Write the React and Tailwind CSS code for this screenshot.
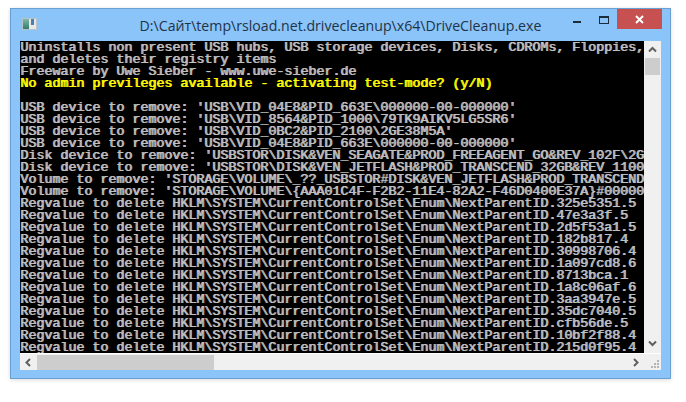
import React from 'react';

const regIds = [
  '325e5351.5', '47e3a3f.5', '2d5f53a1.5', '182b817.4', '30998706.4', '1a097cd8.6', '8713bca.1',
  '1a8c06af.6', '3aa3947e.5', '35dc7040.5', 'cfb56de.5', '10bf2f88.4', '215d0f95.4',
];

const lines = [
  'Uninstalls non present USB hubs, USB storage devices, Disks, CDROMs, Floppies,',
  'and deletes their registry items',
  'Freeware by Uwe Sieber - www.uwe-sieber.de',
  'No admin previleges available - activating test-mode? (y/N)',
  ' ',
  "USB device to remove: 'USB\\VID_04E8&PID_663E\\000000-00-000000'",
  "USB device to remove: 'USB\\VID_8564&PID_1000\\79TK9AIKV5LG5SR6'",
  "USB device to remove: 'USB\\VID_0BC2&PID_2100\\2GE38M5A'",
  "USB device to remove: 'USB\\VID_04E8&PID_663E\\000000-00-000000'",
  "Disk device to remove: 'USBSTOR\\DISK&VEN_SEAGATE&PROD_FREEAGENT_GO&REV_102F\\2G",
  "Disk device to remove: 'USBSTOR\\DISK&VEN_JETFLASH&PROD_TRANSCEND_32GB&REV_1100",
  "Volume to remove: 'STORAGE\\VOLUME\\_??_USBSTOR#DISK&VEN_JETFLASH&PROD_TRANSCEND",
  "Volume to remove: 'STORAGE\\VOLUME\\{AAA01C4F-F2B2-11E4-82A2-F46D0400E37A}#00000",
  ...regIds.map((id) => `Regvalue to delete HKLM\\SYSTEM\\CurrentControlSet\\Enum\\NextParentID.${id}`),
];

const Chevron = ({ d }) => (
  <svg width="9" height="9" viewBox="0 0 9 9" fill="none" stroke="#606060" strokeWidth="2">
    <path d={d} />
  </svg>
);

export default function App() {
  return (
    <div className="w-[686px] h-[402px] bg-white pt-2 pl-[10px] overflow-hidden">
      <div className="w-[661px] h-[371px] bg-[#8ac4f8] border border-[#6a9fd0] shadow-[0_1px_4px_rgba(0,0,0,0.15)] flex flex-col">
        {/* title bar */}
        <div className="h-[32px] grid grid-cols-[1fr_auto_1fr] items-start shrink-0">
          <div className="pl-[11px] pt-[9px]">
            <div className="w-[15px] h-[12px] bg-[#e8e8e8] border border-[#b8c4cc] flex">
              <div className="w-[6px] h-full bg-gradient-to-b from-[#7fb8a8] to-[#2f7d6a]" />
              <div className="w-[2px]" />
              <div className="w-[3px] h-[6px] bg-[#4a7fb0]" />
            </div>
          </div>
          <div className="pt-[7px] text-[14.15px] leading-[20px] text-[#1f3348] whitespace-nowrap font-['Open_Sans',sans-serif]">
            D:\Сайт\temp\rsload.net.drivecleanup\x64\DriveCleanup.exe
          </div>
          <div className="flex items-start justify-end pr-[8px]">
            <div className="w-[8px] h-[2px] bg-[#1c2c3a] mt-[12px] mr-[18px]" />
            <div className="w-[10px] h-[8px] border border-t-2 border-[#1c2c3a] mt-[7px] mr-[8px]" />
            <div className="w-[45px] h-[20px] bg-[#c75050] flex items-center justify-center">
              <svg width="9" height="9" viewBox="0 0 9 9" stroke="#fff" strokeWidth="2">
                <path d="M1 1l7 7M8 1l-7 7" />
              </svg>
            </div>
          </div>
        </div>

        {/* console + scrollbars */}
        <div className="mx-[9px] h-[329px] flex flex-col shrink-0 bg-[#f0f0f0]">
          <div className="flex h-[312px]">
            <div className="w-[624px] h-[312px] pt-[1px] bg-black overflow-hidden">
              {lines.map((line, i) => (
                <div
                  key={i}
                  className={`h-[12px] leading-[12px] text-[13.333px] [text-shadow:1px_0_0_currentColor] whitespace-pre font-['Liberation_Mono',monospace] ${i === 3 ? 'text-[#ffff00]' : 'text-[#c0c0c0]'}`}
                >
                  {line}
                </div>
              ))}
            </div>
            <div className="flex-1 flex flex-col items-center">
              <div className="h-[17px] flex items-center justify-center">
                <Chevron d="M1 6.5l3.5-3.5 3.5 3.5" />
              </div>
              <div className="w-[15px] h-[17px] bg-[#cdcdcd]" />
              <div className="flex-1" />
              <div className="h-[17px] flex items-center justify-center mb-[1px]">
                <Chevron d="M1 2.5l3.5 3.5 3.5-3.5" />
              </div>
            </div>
          </div>
          <div className="flex-1 border-t border-white flex items-center">
            <div className="w-[17px] flex justify-center">
              <Chevron d="M6 1L2.5 4.5 6 8" />
            </div>
            <div className="w-[177px] h-[15px] bg-[#cdcdcd]" />
            <div className="flex-1" />
            <div className="w-[17px] flex justify-center">
              <Chevron d="M3 1l3.5 3.5L3 8" />
            </div>
            <div className="w-[17px] h-full flex items-end justify-end pr-[1px] pb-[1px]">
              <svg width="9" height="9" viewBox="0 0 9 9" fill="#b4b4b4">
                <path d="M6 0h2v2H6zM3 3h2v2H3zM6 3h2v2H6zM0 6h2v2H0zM3 6h2v2H3zM6 6h2v2H6z" />
              </svg>
            </div>
          </div>
        </div>
      </div>
    </div>
  );
}
